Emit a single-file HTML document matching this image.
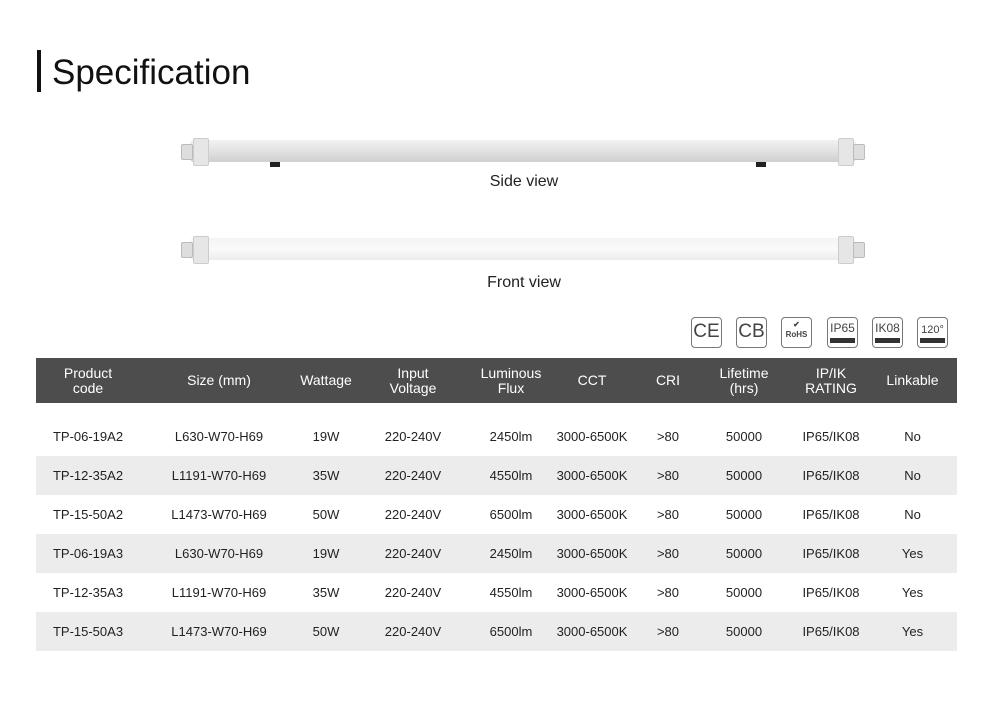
<!DOCTYPE html><html><head><style>
body{margin:0;width:1000px;height:707px;background:#fff;font-family:"Liberation Sans",sans-serif;position:relative;overflow:hidden;color:#222}
.a{position:absolute}
.tube{position:absolute;left:190px;width:666px;height:22px;border-radius:4px}
.cap{position:absolute;width:14px;height:26px;background:#e6e6e6;border:1px solid #ccc;border-radius:2px}
.plug{position:absolute;width:10px;height:14px;background:#ddd;border:1px solid #bbb;border-radius:2px}
.ic{position:absolute;top:317px;width:31px;height:31px;border:1.5px solid #777;border-radius:4px;box-sizing:border-box;text-align:center;color:#444;background:#fff}
table{position:absolute;left:36px;top:358px;width:921px;border-collapse:collapse;font-size:13px;table-layout:fixed}
th{background:#4d4d4d;color:#fff;font-weight:normal;height:45px;line-height:15px;font-size:14px;padding:0}
td{text-align:center;height:39px;padding:0}
th:last-child,td:last-child{padding-right:8px}
tr.g td{background:#ececec}
tr.f td{height:53px;padding-top:14px;box-sizing:border-box}
</style></head><body>
<div class="a" style="left:37px;top:50px;width:4px;height:42px;background:#111"></div>
<div class="a" style="left:52px;top:53px;font-size:35px;color:#111">Specification</div>

<div class="tube" style="top:140px;background:linear-gradient(#f2f2f2,#e2e2e2 50%,#cfcfcf)"></div>
<div class="cap" style="left:193px;top:138px"></div><div class="cap" style="left:838px;top:138px"></div>
<div class="plug" style="left:181px;top:144px"></div><div class="plug" style="left:853px;top:144px"></div>
<div class="a" style="left:270px;top:162px;width:10px;height:5px;background:#222"></div>
<div class="a" style="left:756px;top:162px;width:10px;height:5px;background:#222"></div>
<div class="a" style="left:0;width:1048px;top:173px;text-align:center;font-size:16px">Side view</div>

<div class="tube" style="top:238px;background:linear-gradient(#f4f4f4,#fafafa 50%,#ececec)"></div>
<div class="cap" style="left:193px;top:236px"></div><div class="cap" style="left:838px;top:236px"></div>
<div class="plug" style="left:181px;top:242px"></div><div class="plug" style="left:853px;top:242px"></div>
<div class="a" style="left:0;width:1048px;top:274px;text-align:center;font-size:16px">Front view</div>

<div class="ic" style="left:691px;font-size:19px;line-height:28px">CE</div>
<div class="ic" style="left:736px;font-size:19px;line-height:28px">CB</div>
<div class="ic" style="left:781px;font-size:8px;font-weight:bold;line-height:10px;padding-top:2px">✔<br>RoHS</div>
<div class="ic" style="left:827px;font-size:12px;line-height:20px">IP65<div style="background:#333;height:5px;margin:0 2px"></div></div>
<div class="ic" style="left:872px;font-size:12px;line-height:20px">IK08<div style="background:#333;height:5px;margin:0 2px"></div></div>
<div class="ic" style="left:917px;font-size:11px;line-height:10px;padding-top:7px">120°<div style="background:#333;height:5px;margin:3px 2px 0"></div></div>

<table>
<colgroup><col style="width:104px"><col style="width:158px"><col style="width:56px"><col style="width:118px"><col style="width:78px"><col style="width:84px"><col style="width:68px"><col style="width:84px"><col style="width:90px"><col style="width:81px"></colgroup>
<tr><th>Product<br>code</th><th>Size (mm)</th><th>Wattage</th><th>Input<br>Voltage</th><th>Luminous<br>Flux</th><th>CCT</th><th>CRI</th><th>Lifetime<br>(hrs)</th><th>IP/IK<br>RATING</th><th>Linkable</th></tr>
<tr class="f"><td>TP-06-19A2</td><td>L630-W70-H69</td><td>19W</td><td>220-240V</td><td>2450lm</td><td>3000-6500K</td><td>&gt;80</td><td>50000</td><td>IP65/IK08</td><td>No</td></tr>
<tr class="g"><td>TP-12-35A2</td><td>L1191-W70-H69</td><td>35W</td><td>220-240V</td><td>4550lm</td><td>3000-6500K</td><td>&gt;80</td><td>50000</td><td>IP65/IK08</td><td>No</td></tr>
<tr><td>TP-15-50A2</td><td>L1473-W70-H69</td><td>50W</td><td>220-240V</td><td>6500lm</td><td>3000-6500K</td><td>&gt;80</td><td>50000</td><td>IP65/IK08</td><td>No</td></tr>
<tr class="g"><td>TP-06-19A3</td><td>L630-W70-H69</td><td>19W</td><td>220-240V</td><td>2450lm</td><td>3000-6500K</td><td>&gt;80</td><td>50000</td><td>IP65/IK08</td><td>Yes</td></tr>
<tr><td>TP-12-35A3</td><td>L1191-W70-H69</td><td>35W</td><td>220-240V</td><td>4550lm</td><td>3000-6500K</td><td>&gt;80</td><td>50000</td><td>IP65/IK08</td><td>Yes</td></tr>
<tr class="g"><td>TP-15-50A3</td><td>L1473-W70-H69</td><td>50W</td><td>220-240V</td><td>6500lm</td><td>3000-6500K</td><td>&gt;80</td><td>50000</td><td>IP65/IK08</td><td>Yes</td></tr>
</table>
</body></html>
